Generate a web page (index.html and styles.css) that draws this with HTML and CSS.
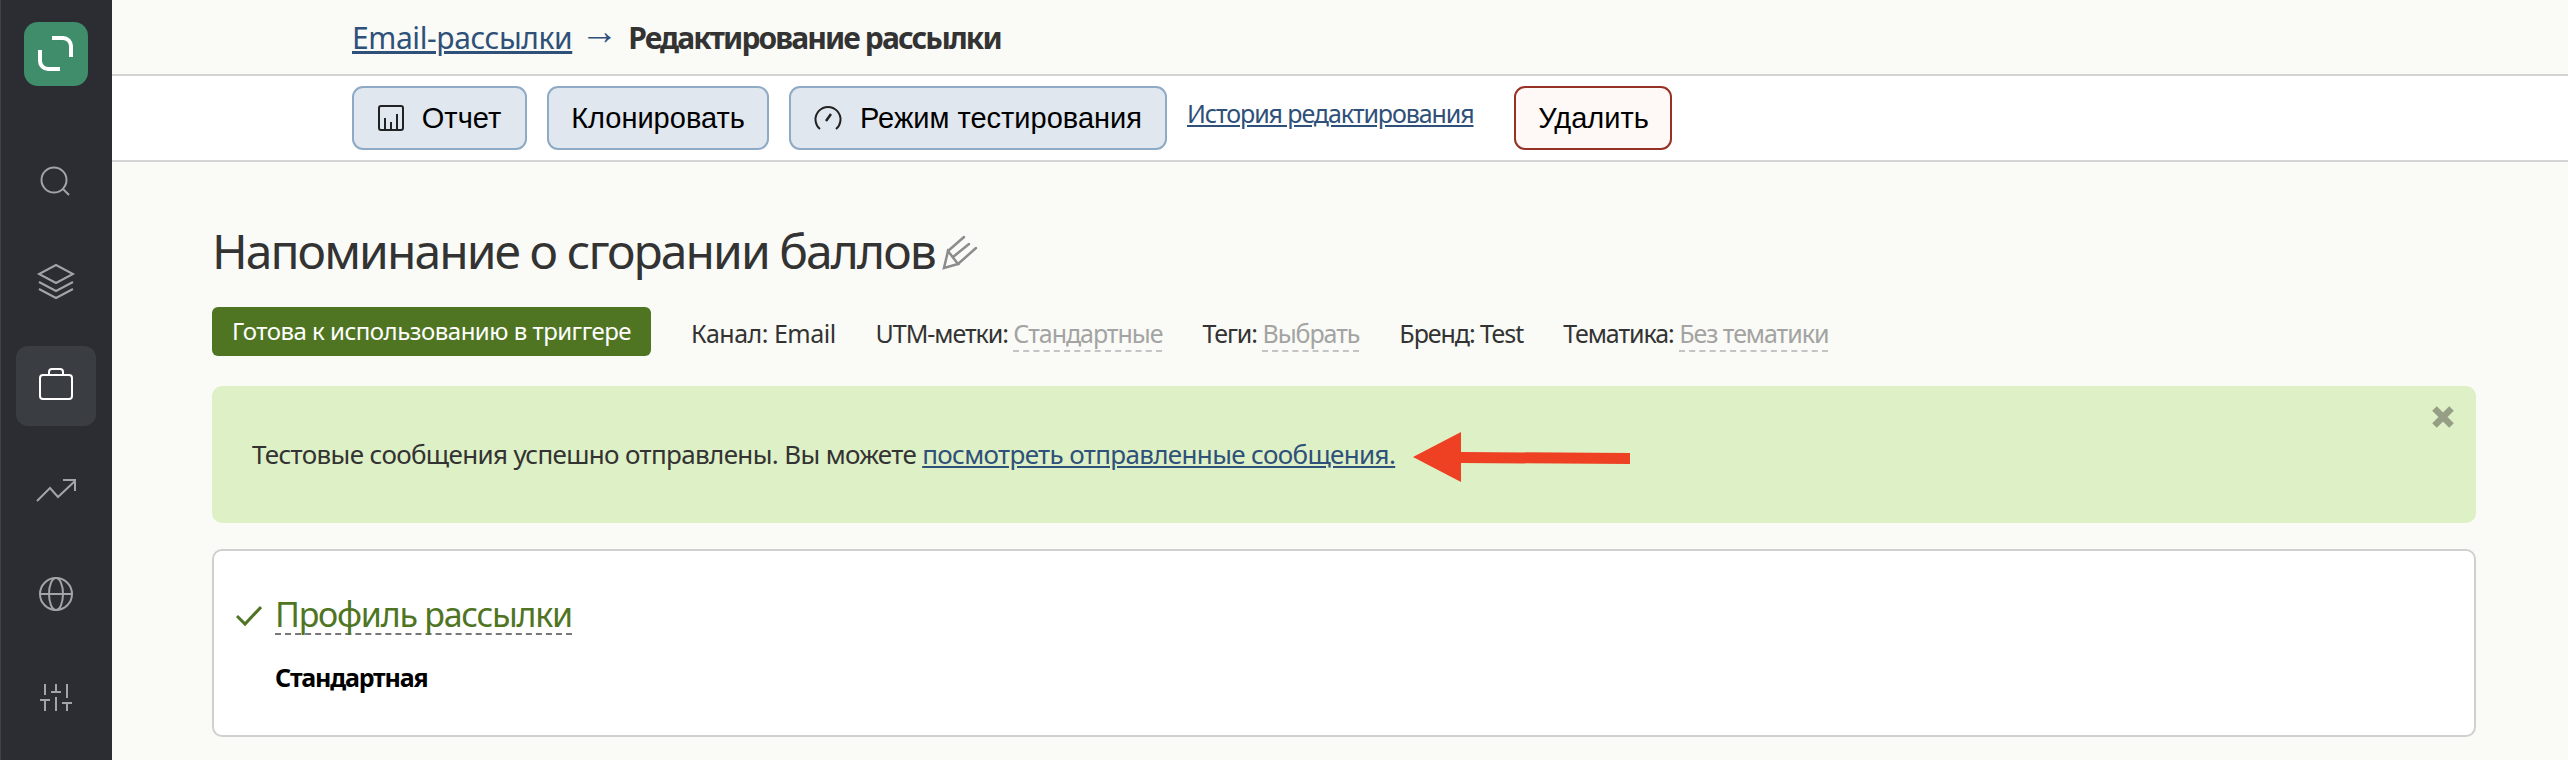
FILE: index.html
```html
<!DOCTYPE html>
<html lang="ru">
<head>
    <meta charset="UTF-8">
    <meta name="viewport" content="width=device-width, initial-scale=1.0">
    <title>Редактирование рассылки</title>
    <link rel="stylesheet" href="styles.css">
</head>
<body>
    <aside class="sidebar">
        <div class="logo">
            <svg width="64" height="64" viewBox="0 0 64 64" fill="none" stroke="#fff" stroke-width="4">
                <path d="M28 16h11a8 8 0 0 1 8 8v11"/>
                <path d="M36 47H24a8 8 0 0 1-8-8V28"/>
            </svg>
        </div>
        <nav class="side-nav">
            <a class="side-item" href="#">
                <svg width="40" height="40" viewBox="0 0 40 40" fill="none" stroke="#a3a4a7" stroke-width="2">
                    <circle cx="18" cy="22" r="12.5"/>
                    <path d="M27 31l6 6"/>
                </svg>
            </a>
            <a class="side-item" href="#">
                <svg width="40" height="40" viewBox="0 0 40 40" fill="none" stroke="#a3a4a7" stroke-width="2">
                    <path d="M20 3l17 9-17 9-17-9z"/>
                    <path d="M3 20l17 9 17-9"/>
                    <path d="M3 27l17 9 17-9"/>
                </svg>
            </a>
            <a class="side-item active" href="#">
                <svg width="40" height="40" viewBox="0 0 40 40" fill="none" stroke="#fff" stroke-width="2">
                    <rect x="4" y="9" width="32" height="24" rx="3"/>
                    <path d="M13 9V6a3 3 0 0 1 3-3h8a3 3 0 0 1 3 3v3"/>
                </svg>
            </a>
            <a class="side-item" href="#">
                <svg width="40" height="40" viewBox="0 0 40 40" fill="none" stroke="#a3a4a7" stroke-width="2">
                    <path d="M1 31l13-13 8 9 17-16"/>
                    <path d="M27 10h12v11"/>
                </svg>
            </a>
            <a class="side-item" href="#">
                <svg width="40" height="40" viewBox="0 0 40 40" fill="none" stroke="#a3a4a7" stroke-width="2">
                    <circle cx="20" cy="20" r="16"/>
                    <ellipse cx="20" cy="20" rx="7" ry="16"/>
                    <path d="M4 20h32"/>
                </svg>
            </a>
            <a class="side-item" href="#">
                <svg width="40" height="40" viewBox="0 0 40 40" fill="none" stroke="#a3a4a7" stroke-width="2">
                    <path d="M9 6v11M4 22h10M9 22v11"/>
                    <path d="M20 6v8M15 14h10M20 19v14"/>
                    <path d="M31 6v14M26 25h10M31 25v8"/>
                </svg>
            </a>
        </nav>
    </aside>

    <main class="main">
        <header class="crumbs">
            <a class="crumb-link" href="#">Email-рассылки</a>
            <span class="crumb-arrow">→</span>
            <b class="crumb-current">Редактирование рассылки</b>
        </header>

        <div class="toolbar">
            <a class="btn btn-report" href="#">
                <svg width="26" height="26" viewBox="0 0 26 26" fill="none" stroke="#222" stroke-width="2">
                    <rect x="1" y="1" width="24" height="24" rx="2"/>
                    <path d="M7 24V13M13 24v-7M19 24V9"/>
                </svg>
                Отчет
            </a>
            <a class="btn btn-clone" href="#">Клонировать</a>
            <a class="btn btn-test" href="#">
                <svg width="28" height="28" viewBox="0 0 28 28" fill="none" stroke="#222" stroke-width="2">
                    <path d="M6 25a12.5 12.5 0 1 1 16 0"/>
                    <path d="M12 17l5-7" stroke-width="2.5"/>
                </svg>
                Режим тестирования
            </a>
            <a class="history-link" href="#">История редактирования</a>
            <a class="btn btn-delete" href="#">Удалить</a>
        </div>

        <section class="content">
            <h1 class="page-title">Напоминание о сгорании баллов<svg class="edit-icon" width="38" height="38" viewBox="0 0 38 38" fill="none" stroke="#8c8c8c" stroke-width="2.5" stroke-linecap="round"><path d="M3 34l4-17 10 13z"/><path d="M7 17L23 3M12 23L28 10M17 30L35 14"/></svg></h1>

            <div class="meta">
                <span class="status-badge">Готова к использованию в триггере</span>
                <span class="meta-item meta-channel">Канал: Email</span>
                <span class="meta-item">UTM-метки: <a class="meta-value" href="#">Стандартные</a></span>
                <span class="meta-item">Теги: <a class="meta-value" href="#">Выбрать</a></span>
                <span class="meta-item">Бренд: Test</span>
                <span class="meta-item">Тематика: <a class="meta-value" href="#">Без тематики</a></span>
            </div>

            <div class="alert">
                Тестовые сообщения успешно отправлены. Вы можете <a class="alert-link" href="#">посмотреть отправленные сообщения.</a>
                <svg class="alert-close" width="22" height="22" viewBox="0 0 22 22" stroke="#969f86" stroke-width="6.5"><path d="M2.5 2.5l17 17M19.5 2.5l-17 17"/></svg>
                <svg class="alert-arrow" width="217" height="50" viewBox="0 0 217 50" fill="#ee4023"><path d="M0 25L48 0v20l169 1v11L48 31v19z"/></svg>
            </div>

            <div class="card">
                <div class="card-title">
                    <svg width="26" height="22" viewBox="0 0 26 22" fill="none" stroke="#4f7523" stroke-width="3"><path d="M1 11l8 8L25 2"/></svg>
                    <a class="card-link" href="#">Профиль рассылки</a>
                </div>
                <div class="card-value">Стандартная</div>
            </div>
        </section>
    </main>
</body>
</html>
```

FILE: styles.css
```css
body {
    font-family: 'Noto Sans', sans-serif;
    background: #fafbf6;
    color: #333;
    margin: 0;
    height: 760px;
    overflow: hidden;
    display: flex;
}
a {
    color: #2f5079;
}
.sidebar {
    width: 111px;
    flex-shrink: 0;
    background: #2b2d33;
    border-left: 1px solid #3f4147;
}
.logo {
    width: 64px;
    height: 64px;
    margin: 22px 0 0 23px;
    background: #3f8d6b;
    border-radius: 14px;
}
.side-nav {
    margin-top: 52px;
    display: flex;
    flex-direction: column;
    gap: 24px;
}
.side-item {
    width: 80px;
    height: 80px;
    margin-left: 15px;
    border-radius: 12px;
    display: flex;
    align-items: center;
    justify-content: center;
}
.side-item.active {
    background: #3a3d42;
}
.main {
    flex: 1;
    min-width: 0;
}
.crumbs {
    height: 74px;
    box-sizing: border-box;
    padding-left: 240px;
    display: flex;
    align-items: center;
    font-size: 30px;
}
.crumb-link {
    letter-spacing: -0.4px;
}
.crumb-arrow {
    margin: 0 10px 16px 8px;
    font-size: 38px;
    line-height: 1;
    color: #2f5079;
}
.crumb-current {
    letter-spacing: -1.9px;
}
.toolbar {
    height: 88px;
    box-sizing: border-box;
    background: #fff;
    border-top: 2px solid #d4d4d4;
    border-bottom: 2px solid #d4d4d4;
    padding: 10px 0 0 240px;
    display: flex;
    align-items: flex-start;
}
.btn {
    height: 64px;
    box-sizing: border-box;
    border: 2px solid #8faac5;
    border-radius: 11px;
    background: #e1e7ef;
    color: #000;
    font-family: 'Liberation Sans', sans-serif;
    font-size: 29px;
    text-decoration: none;
    display: flex;
    align-items: center;
    justify-content: center;
    gap: 18px;
}
.btn-report {
    width: 175px;
    margin-right: 20px;
}
.btn-clone {
    width: 222px;
    margin-right: 20px;
}
.btn-test {
    width: 378px;
    margin-right: 20px;
}
.history-link {
    font-size: 25px;
    letter-spacing: -1.1px;
    margin: 10px 41px 0 0;
}
.btn-delete {
    width: 158px;
    border-color: #953225;
    background: #fef9f6;
}
.content {
    padding: 0 92px 0 100px;
}
.page-title {
    margin: 54px 0 0;
    font-size: 48px;
    font-weight: 400;
    line-height: 70px;
    letter-spacing: -1.95px;
    display: flex;
    align-items: center;
}
.edit-icon {
    flex-shrink: 0;
    margin: 4px 0 0 6px;
}
.meta {
    margin-top: 21px;
    display: flex;
    align-items: center;
    gap: 40px;
    font-size: 25px;
    letter-spacing: -1.05px;
}
.meta-item {
    padding-top: 3px;
}
.meta-channel {
    letter-spacing: -0.5px;
}
.status-badge {
    width: 439px;
    height: 49px;
    box-sizing: border-box;
    border-radius: 6px;
    background: #4f7523;
    color: #fff;
    font-size: 24px;
    letter-spacing: -0.5px;
    text-align: center;
    line-height: 47px;
}
.meta-value {
    color: #a3a3a3;
    text-decoration: none;
    border-bottom: 2px dashed #c4c4c4;
}
.alert {
    position: relative;
    margin-top: 30px;
    height: 137px;
    box-sizing: border-box;
    padding-left: 40px;
    border-radius: 10px;
    background: #def0c5;
    line-height: 137px;
    font-size: 26px;
    letter-spacing: -0.65px;
}
.alert-close {
    position: absolute;
    top: 20px;
    right: 22px;
}
.alert-arrow {
    position: absolute;
    left: 1201px;
    top: 46px;
}
.card {
    margin-top: 26px;
    height: 188px;
    box-sizing: border-box;
    background: #fff;
    border: 2px solid #d0d0d0;
    border-radius: 10px;
    padding: 45px 0 0 22px;
}
.card-title {
    display: flex;
    align-items: center;
    gap: 13px;
    font-size: 34px;
    letter-spacing: -1.25px;
}
.card-link {
    color: #4f7523;
    text-decoration: none;
    border-bottom: 2px dashed #777;
    line-height: 37px;
}
.card-value {
    margin: 25px 0 0 39px;
    font-size: 25px;
    font-weight: 700;
    color: #000;
    letter-spacing: -1.2px;
}
```
